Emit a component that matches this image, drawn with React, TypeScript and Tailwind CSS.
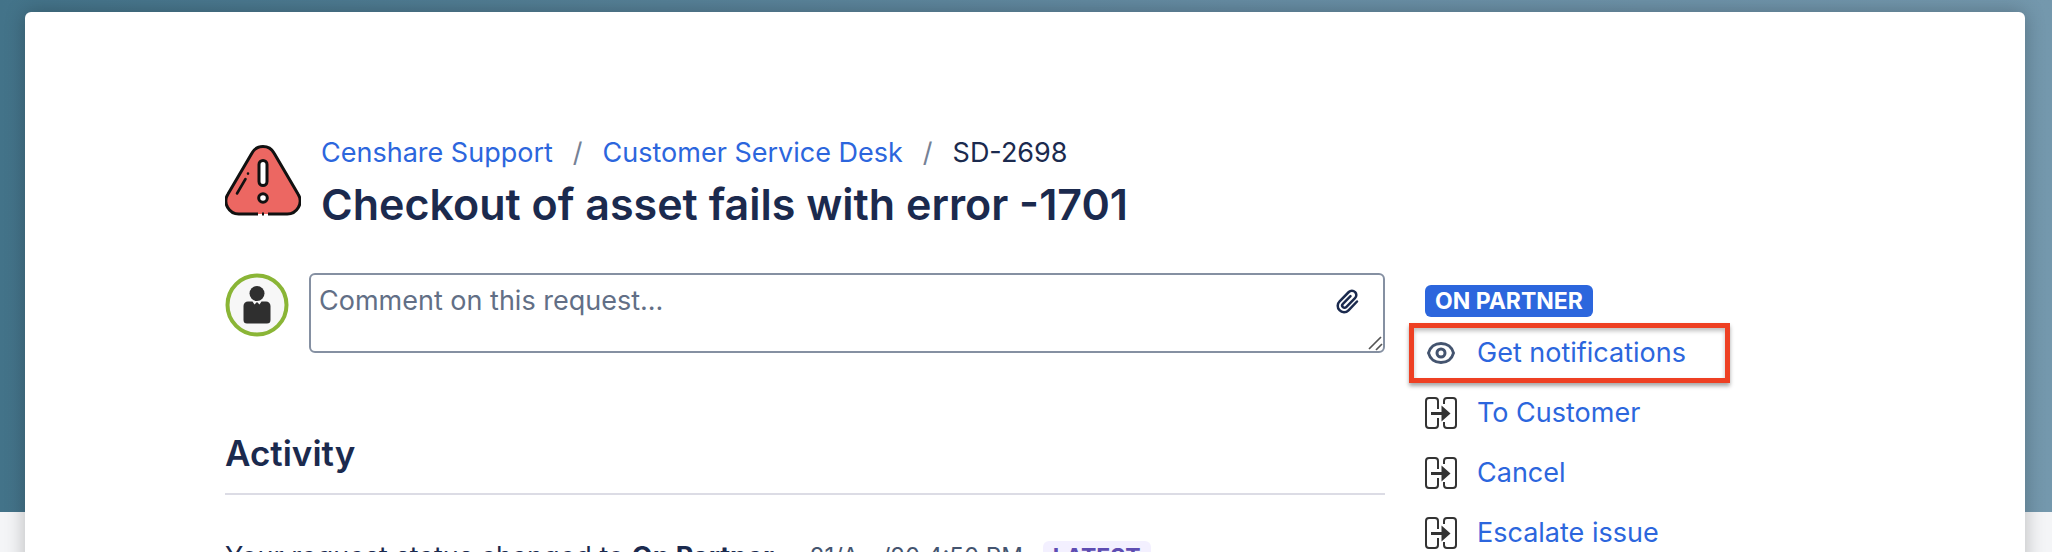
import type { ReactNode } from 'react';

interface RequestAction {
  label: string;
  icon: ReactNode;
  highlighted?: boolean;
}

function WarningIcon() {
  return (
    <svg viewBox="0 0 76 76" className="mt-3 size-[76px] shrink-0" aria-hidden="true">
      <path
        d="M27 9a12.500 12.500 0 0 1 22 0L73 50a13 13 0 0 1-11.500 20H14.500A13 13 0 0 1 3 50Z"
        fill="#ec6762"
      />
      <path
        d="M43 70h18.500A13 13 0 0 0 73 50L49 9a12.500 12.500 0 0 0-22 0L3 50A13 13 0 0 0 14.500 70H33M37 70h2"
        fill="none"
        stroke="#111"
        strokeWidth="3"
      />
      <rect x="34" y="16.5" width="8" height="25" rx="4" fill="#fff" stroke="#111" strokeWidth="3" />
      <circle cx="38" cy="54" r="4.3" fill="#fff" stroke="#111" strokeWidth="3" />
      <path d="M12 49.500l8.500-14.500M23 29.500v.1" stroke="#111" strokeWidth="2.6" strokeLinecap="round" />
    </svg>
  );
}

function Avatar() {
  return (
    <svg viewBox="0 0 64 64" className="size-16 shrink-0" role="img" aria-label="Your avatar">
      <circle cx="32" cy="32" r="29.5" fill="#f7f7f7" stroke="#8ab536" strokeWidth="4" />
      <circle cx="32" cy="20.5" r="7.5" fill="#2f2f2f" />
      <path
        d="M23 28.500h4.500l2 3 2.500-2.500 2.500 2.500 2-3H41a4.500 4.500 0 0 1 4.500 4.500v14a3.500 3.500 0 0 1-3.500 3.500H22a3.500 3.500 0 0 1-3.500-3.500V33a4.500 4.500 0 0 1 4.500-4.500Z"
        fill="#2f2f2f"
      />
    </svg>
  );
}

function PaperclipIcon() {
  return (
    <svg viewBox="0 0 24 26" className="h-[26px] w-6" fill="none" aria-hidden="true">
      <path
        d="M22 12.500l-8.500 8.800a6.200 6.200 0 0 1-9-.1 6.300 6.300 0 0 1 .1-8.900l9.200-9.300a4.300 4.300 0 0 1 6.200 0 4.300 4.300 0 0 1 0 6.200l-8.800 8.900a2.300 2.300 0 0 1-3.300-3.300l7.600-7.700"
        stroke="#1b2a4e"
        strokeWidth="2.5"
        strokeLinecap="round"
      />
    </svg>
  );
}

function EyeIcon() {
  return (
    <svg viewBox="0 0 32 32" className="size-8" fill="none" stroke="#44546f" strokeWidth="3" aria-hidden="true">
      <path d="M3.500 16C5 10 10 6.500 16 6.500S27 10 28.500 16C27 22 22 25.500 16 25.500S5 22 3.500 16Z" />
      <circle cx="16" cy="16" r="4" />
    </svg>
  );
}

function TransitionIcon() {
  return (
    <svg viewBox="0 0 32 32" className="size-8" fill="none" stroke="#333" strokeWidth="2" aria-hidden="true">
      <path d="M13 12V4a3 3 0 0 0-3-3H4a3 3 0 0 0-3 3v24a3 3 0 0 0 3 3h6a3 3 0 0 0 3-3v-7" />
      <path d="M19 7V4a3 3 0 0 1 3-3h6a3 3 0 0 1 3 3v24a3 3 0 0 1-3 3h-6a3 3 0 0 1-3-3v-3" />
      <path d="M6 16.500h12" strokeWidth="3" />
      <path d="M16.500 8.500l9 8-9 8Z" fill="#333" stroke="none" />
    </svg>
  );
}

const actions: RequestAction[] = [
  { label: 'Get notifications', icon: <EyeIcon />, highlighted: true },
  { label: 'To Customer', icon: <TransitionIcon /> },
  { label: 'Cancel', icon: <TransitionIcon /> },
  { label: 'Escalate issue', icon: <TransitionIcon /> },
];

function Breadcrumbs() {
  return (
    <nav aria-label="Breadcrumb" className="flex gap-5 text-[27px] leading-[42px]">
      <a href="#support" className="text-[#2c66dd]">Censhare Support</a>
      <span className="text-[#758195]">/</span>
      <a href="#desk" className="text-[#2c66dd]">Customer Service Desk</a>
      <span className="text-[#758195]">/</span>
      <span>SD-2698</span>
    </nav>
  );
}

function CommentBox() {
  return (
    <div className="flex items-start gap-5">
      <Avatar />
      <div className="relative flex-1">
        <textarea
          aria-label="Comment on this request"
          placeholder="Comment on this request..."
          className="block h-20 w-full resize-none rounded-md border-2 border-[#8590a2] px-2 py-1.5 text-[27px] leading-10 placeholder:text-[#626f86]"
        />
        <button type="button" aria-label="Attach a file" className="absolute top-4 right-[26px]">
          <PaperclipIcon />
        </button>
        <svg viewBox="0 0 16 16" className="absolute right-0.5 bottom-0.5 size-4" stroke="#555" strokeWidth="1.7" aria-hidden="true">
          <path d="M2 14L14 2M9 15l6-6" />
        </svg>
      </div>
    </div>
  );
}

function ActionLink({ label, icon, highlighted }: RequestAction) {
  return (
    <li className="relative">
      <button type="button" className="flex h-[60px] items-center gap-5 text-[27px] text-[#2c66dd]">
        {icon}
        {label}
      </button>
      {highlighted && (
        <div className="pointer-events-none absolute inset-y-0 -left-4 w-[321px] border-[5px] border-[#ee4023] shadow-[0_3px_4px_rgba(0,0,0,0.35),inset_0_3px_4px_rgba(0,0,0,0.25)]" />
      )}
    </li>
  );
}

export default function App() {
  return (
    <div className="h-screen overflow-hidden bg-[#f4f5f7] font-[Inter,sans-serif] text-[#1b2a4e]">
      <div className="bg-linear-to-r from-[#437389] via-[#668ca3] via-60% to-[#7498ad] bg-[length:100%_512px] bg-no-repeat pt-3 pr-[27px] pl-[25px]">
        <main className="min-h-screen rounded-md bg-white px-[200px] pt-[120px] shadow-[0_0_20px_rgba(0,0,0,0.25)]">
          <header className="flex items-start gap-5">
            <WarningIcon />
            <div>
              <Breadcrumbs />
              <h1 className="text-[43px] leading-[60px] font-semibold">Checkout of asset fails with error -1701</h1>
            </div>
          </header>
          <div className="mt-[39px] flex gap-10">
            <div className="min-w-0 flex-1">
              <CommentBox />
              <h2 className="mt-[78px] border-b-2 border-[#dcdce5] pb-[18px] text-[35px] leading-[44px] font-semibold">Activity</h2>
              <div className="mt-[42px] flex items-center text-[27px] leading-10 whitespace-nowrap">
                <p>
                  Your request status changed to <strong>On Partner</strong>.
                </p>
                <time className="ml-7 text-2xl text-[#44546f]">21/Apr/20 4:50 PM</time>
                <span className="ml-5 rounded-md bg-[#f3f0ff] px-2.5 text-[23px] leading-8 font-bold text-[#5e4db2]">LATEST</span>
              </div>
            </div>
            <aside className="w-[400px] shrink-0 pt-3">
              <span className="block w-fit rounded-md bg-[#2c66dd] px-2.5 text-[23px] leading-8 font-bold text-white">ON PARTNER</span>
              <ul className="mt-1.5">
                {actions.map((action) => (
                  <ActionLink key={action.label} {...action} />
                ))}
              </ul>
            </aside>
          </div>
        </main>
      </div>
    </div>
  );
}
